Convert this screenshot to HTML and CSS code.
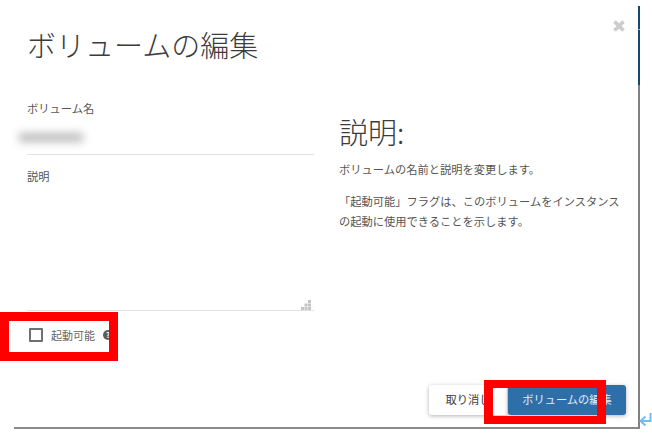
FILE: index.html
```html
<!DOCTYPE html>
<html lang="ja">
<head>
<meta charset="utf-8">
<title>ボリュームの編集</title>
<link rel="stylesheet" href="styles.css">
</head>
<body>
<div class="modal">
  <button class="close" aria-label="閉じる">
    <svg width="14" height="14" viewBox="0 0 14 14"><path d="M2.5 2.5 11.5 11.5M11.5 2.5 2.5 11.5" stroke="#cccccc" stroke-width="3.8" fill="none"/></svg>
  </button>
  <div class="body">
    <div class="form">
      <h1 class="title">ボリュームの編集</h1>
      <label class="label name-label">ボリューム名</label>
      <div class="name-field"><span class="blur"></span></div>
      <label class="label desc-label">説明</label>
      <div class="desc-field">
        <svg class="grip" width="10" height="10" viewBox="0 0 10 10"><g fill="#c4c4c4"><rect x="7" y="0" width="3" height="3"/><rect x="3.5" y="3.5" width="3" height="3"/><rect x="7" y="3.5" width="3" height="3"/><rect x="0" y="7" width="3" height="3"/><rect x="3.5" y="7" width="3" height="3"/><rect x="7" y="7" width="3" height="3"/></g></svg>
      </div>
      <div class="check-row">
        <span class="checkbox"></span>
        <span class="check-text">起動可能</span>
        <span class="help">?</span>
      </div>
    </div>
    <div class="info">
      <h2 class="info-title">説明:</h2>
      <p class="info-text">ボリュームの名前と説明を変更します。</p>
      <p class="info-text">「起動可能」フラグは、このボリュームをインスタンスの起動に使用できることを示します。</p>
    </div>
  </div>
  <div class="footer">
    <button class="btn cancel">取り消し</button>
    <button class="btn primary">ボリュームの編集</button>
  </div>
</div>
<div class="edge-top"></div>
<div class="redact redact-check"></div>
<div class="redact redact-btn"></div>
<svg class="return" width="13" height="15" viewBox="0 0 13 15"><path d="M11.5 0V8H2M6.5 3.5 1.5 8 6.5 12.5" stroke="#72bcf4" stroke-width="2" fill="none"/></svg>
</body>
</html>
```
FILE: styles.css
```css
* { box-sizing: border-box; }
html, body { margin: 0; height: 100%; }
body {
  width: 652px;
  height: 434px;
  overflow: hidden;
  background: #fff;
  font-family: "Noto Sans CJK JP", "Noto Sans", sans-serif;
  color: #555;
  position: relative;
}
.modal {
  width: 626px;
  height: 423px;
  margin: 6px 0 0 14px;
  background: #fff;
  border-right: 2px solid #808080;
  border-bottom: 2px solid #8a8a8a;
  position: relative;
  display: flex;
  flex-direction: column;
}
.close {
  position: absolute;
  left: 598px;
  top: 13px;
  width: 14px;
  height: 14px;
  padding: 0;
  border: 0;
  background: none;
  display: block;
}
.close svg { display: block; }
.body { display: flex; flex: 1; padding-left: 13px; }
.form { width: 287px; display: flex; flex-direction: column; }
.title {
  margin: 16px 0 0;
  font-size: 29px;
  line-height: 44px;
  font-weight: 300;
  color: #3c3c3c;
}
.label { font-size: 11.25px; line-height: 16px; color: #555; display: block; }
.name-label { margin-top: 34px; }
.name-field {
  height: 33px;
  margin-top: 6px;
  border-bottom: 1px solid #e2e2e2;
  position: relative;
}
.blur {
  position: absolute;
  left: -8px;
  top: 11px;
  width: 64px;
  height: 9px;
  background: #bcbcbc;
  filter: blur(4px);
}
.desc-label { margin-top: 13px; }
.desc-field {
  height: 127px;
  border-bottom: 1px solid #e2e2e2;
  display: flex;
  justify-content: flex-end;
  align-items: flex-end;
  padding-right: 3px;
}
.grip { display: block; }
.check-row { display: flex; align-items: center; margin-top: 15px; height: 18px; padding-left: 2px; }
.checkbox {
  width: 14px;
  height: 14px;
  border: 2px solid #707070;
  border-radius: 1px;
  background: #fff;
}
.check-text { margin-left: 8px; font-size: 11px; color: #666; }
.help {
  margin-left: 8px;
  width: 10px;
  height: 10px;
  border-radius: 50%;
  background: #5c5c5c;
  color: #fff;
  font-size: 8px;
  line-height: 10px;
  font-weight: 700;
  text-align: center;
}
.info { width: 282px; margin-left: 25px; padding-top: 105px; }
.info-title {
  margin: 0;
  font-size: 29px;
  line-height: 40px;
  font-weight: 300;
  color: #3c3c3c;
}
.info-text { margin: 0 0 12px; font-size: 11.25px; line-height: 20px; color: #555; }
.info-title + .info-text { margin-top: 8px; }
.footer {
  display: flex;
  justify-content: flex-end;
  gap: 1px;
  padding-right: 12px;
  padding-bottom: 12px;
}
.btn {
  height: 30px;
  border-radius: 3px;
  font-family: inherit;
  font-size: 11.25px;
  padding: 0 0 2px;
  border: 0;
}
.cancel {
  width: 78px;
  background: #fff;
  color: #3c3c3c;
  box-shadow: 0 1px 4px rgba(0,0,0,.3);
}
.primary {
  width: 118px;
  background: #2f6fa9;
  color: #e4edf5;
  box-shadow: 0 1px 4px rgba(0,0,0,.3);
}
.edge-top {
  position: absolute;
  left: 638px;
  top: 6px;
  width: 2px;
  height: 79px;
  background: linear-gradient(#17486f 0 23px, #9fb2c2 23px 24px, #17486f 24px);
}
.redact {
  position: absolute;
  border-style: solid;
  border-color: #ff0000;
}
.redact-check { left: 0; top: 312px; width: 118px; height: 49px; border-width: 9px; }
.redact-btn { left: 484px; top: 380px; width: 122px; height: 44px; border-width: 8px 9px; }
.return { position: absolute; left: 639px; top: 413px; }
```
